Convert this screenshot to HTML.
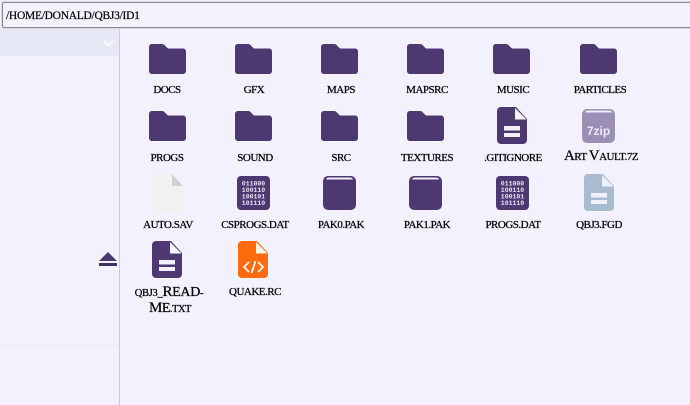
<!DOCTYPE html>
<html>
<head>
<meta charset="utf-8">
<style>
html,body{margin:0;padding:0;width:690px;height:405px;overflow:hidden;background:#f3f1fd;}
body{position:relative;font-family:"Liberation Serif",serif;color:#000;}
.path{position:absolute;left:2px;top:2px;width:690px;height:24px;border:1px solid #8a8a90;border-right:none;background:#f4f2fe;border-radius:2px;box-sizing:content-box;font-size:11.5px;line-height:26px;padding-left:3px;letter-spacing:-.27px;box-shadow:0 0 0 1px #d8d8e0;-webkit-text-stroke:.2px #000;}
.sel{position:absolute;left:0;top:29px;width:119px;height:27px;background:#e6e8f5;}
.vl{position:absolute;left:119px;top:29px;width:1px;height:376px;background:#c9c9e6;}
.hl{position:absolute;left:0;top:344px;width:119px;height:1px;background:#ecebf9;}
.l{position:absolute;width:86px;margin-top:1px;text-align:center;font-size:11px;line-height:15px;letter-spacing:-.5px;white-space:nowrap;-webkit-text-stroke:.25px #000;}
svg.i{position:absolute;overflow:visible;filter:drop-shadow(0 0 .7px #fff);}
</style>
</head>
<body>
<div class="path">/HOME/DONALD/QBJ3/ID1</div>
<div class="sel"></div>
<div class="vl"></div>
<div class="hl"></div>
<svg class="i" style="left:103px;top:39px" width="11" height="8" viewBox="0 0 11 8"><path d="M1 2l4.500 4.500L10 2" fill="none" stroke="#f4f5fb" stroke-width="1.600"/></svg>
<svg class="i" style="left:99px;top:252px" width="18" height="15" viewBox="0 0 18 15"><path d="M9 0L18 9H0Z" fill="#4b3870"/><rect x="0" y="11" width="18" height="3" fill="#3f2f68"/></svg>

<svg width="0" height="0" style="position:absolute">
<defs>
<symbol id="f" viewBox="0 0 37 30"><path d="M3 0h10c1.500 0 2.400.7 3.200 1.800L19 4.500h15c1.700 0 3 1.300 3 3V27c0 1.700-1.300 3-3 3H3c-1.700 0-3-1.300-3-3V3c0-1.700 1.300-3 3-3z" fill="#4d3872"/></symbol>
<symbol id="d" viewBox="0 0 30 37"><path d="M4 0h15l11 12v21c0 2.200-1.800 4-4 4H4c-2.200 0-4-1.800-4-4V4c0-2.200 1.800-4 4-4z" fill="#4d3872"/><path d="M18 1L29.500 12.500H18z" fill="#f7f6fc"/><rect x="7" y="19" width="16" height="4.500" fill="#f3f1fd"/><rect x="7" y="26" width="16" height="4" fill="#f3f1fd"/></symbol>
<symbol id="b" viewBox="0 0 33 34"><rect width="33" height="34" rx="4" fill="#4d3872"/><text x="16.500" y="9.500" font-family="Liberation Mono,monospace" font-size="6.500" font-weight="bold" fill="#e8e5f0" text-anchor="middle">011000</text><text x="16.500" y="16" font-family="Liberation Mono,monospace" font-size="6.500" font-weight="bold" fill="#e8e5f0" text-anchor="middle">100110</text><text x="16.500" y="22.500" font-family="Liberation Mono,monospace" font-size="6.500" font-weight="bold" fill="#e8e5f0" text-anchor="middle">100101</text><text x="16.500" y="29" font-family="Liberation Mono,monospace" font-size="6.500" font-weight="bold" fill="#e8e5f0" text-anchor="middle">101110</text></symbol>
<symbol id="p" viewBox="0 0 33 34"><rect width="33" height="34" rx="5" fill="#4d3872"/><path d="M3 3.500c.5-1.500 1.500-2 3-2h21c1.500 0 2.500.5 3 2z" fill="#f3f1fd"/></symbol>
</defs>
</svg>

<svg class="i" style="left:149px;top:44px" width="37" height="30"><use href="#f"/></svg>
<svg class="i" style="left:235px;top:44px" width="37" height="30"><use href="#f"/></svg>
<svg class="i" style="left:321px;top:44px" width="37" height="30"><use href="#f"/></svg>
<svg class="i" style="left:407px;top:44px" width="37" height="30"><use href="#f"/></svg>
<svg class="i" style="left:493px;top:44px" width="37" height="30"><use href="#f"/></svg>
<svg class="i" style="left:580px;top:44px" width="37" height="30"><use href="#f"/></svg>
<div class="l" style="left:124px;top:82px">DOCS</div>
<div class="l" style="left:211px;top:82px">GFX</div>
<div class="l" style="left:298px;top:82px">MAPS</div>
<div class="l" style="left:384px;top:82px">MAPSRC</div>
<div class="l" style="left:470px;top:82px">MUSIC</div>
<div class="l" style="left:557px;top:82px">PARTICLES</div>

<svg class="i" style="left:149px;top:111px" width="37" height="30"><use href="#f"/></svg>
<svg class="i" style="left:235px;top:111px" width="37" height="30"><use href="#f"/></svg>
<svg class="i" style="left:321px;top:111px" width="37" height="30"><use href="#f"/></svg>
<svg class="i" style="left:407px;top:111px" width="37" height="30"><use href="#f"/></svg>
<svg class="i" style="left:497px;top:107px" width="30" height="37"><use href="#d"/></svg>
<svg class="i" style="left:582px;top:109px" width="33" height="34" viewBox="0 0 33 34"><rect width="33" height="34" rx="5" fill="#9b8fb5"/><path d="M3 3.500c.5-1.500 1.500-2 3-2h21c1.500 0 2.500.5 3 2z" fill="#f0eef8"/><text x="16.500" y="26" font-family="Liberation Sans,sans-serif" font-size="12" font-weight="bold" fill="#eeeaf6" text-anchor="middle">7zip</text></svg>
<div class="l" style="left:124px;top:150px">PROGS</div>
<div class="l" style="left:212px;top:150px">SOUND</div>
<div class="l" style="left:298px;top:150px">SRC</div>
<div class="l" style="left:384px;top:150px">TEXTURES</div>
<div class="l" style="left:470px;top:150px">.GITIGNORE</div>
<div class="l" style="left:558px;top:148px"><span style="font-size:15px">A</span>RT <span style="font-size:15px">V</span>AULT.7Z</div>

<svg class="i" style="left:153px;top:174px;filter:none" width="30" height="38" viewBox="0 0 30 38"><path d="M0 0h19l11 12v26H0z" fill="#f2f1ef"/><path d="M19 0l11 12H19z" fill="#d2d2d0"/></svg>
<svg class="i" style="left:237px;top:176px" width="33" height="34"><use href="#b"/></svg>
<svg class="i" style="left:323px;top:176px" width="33" height="34"><use href="#p"/></svg>
<svg class="i" style="left:409px;top:176px" width="33" height="34"><use href="#p"/></svg>
<svg class="i" style="left:496px;top:176px" width="33" height="34"><use href="#b"/></svg>
<svg class="i" style="left:584px;top:174px" width="30" height="37" viewBox="0 0 30 37"><path d="M4 0h15l11 12v21c0 2.200-1.800 4-4 4H4c-2.200 0-4-1.800-4-4V4c0-2.200 1.800-4 4-4z" fill="#a8bbd0"/><path d="M18 1L29.500 12.500H18z" fill="#eef0f7"/><rect x="7" y="19" width="16" height="4.500" fill="#f0f2f8"/><rect x="7" y="26" width="16" height="4" fill="#f0f2f8"/></svg>
<div class="l" style="left:125px;top:217px">AUTO.SAV</div>
<div class="l" style="left:212px;top:217px">CSPROGS.DAT</div>
<div class="l" style="left:298px;top:217px">PAK0.PAK</div>
<div class="l" style="left:384px;top:217px">PAK1.PAK</div>
<div class="l" style="left:470px;top:217px">PROGS.DAT</div>
<div class="l" style="left:556px;top:217px">QBJ3.FGD</div>

<svg class="i" style="left:152px;top:241px" width="30" height="37"><use href="#d"/></svg>
<svg class="i" style="left:238px;top:241px" width="30" height="37" viewBox="0 0 30 37"><path d="M4 0h15l11 12v21c0 2.200-1.800 4-4 4H4c-2.200 0-4-1.800-4-4V4c0-2.200 1.800-4 4-4z" fill="#ff6a0d"/><path d="M18 1L29.500 12.500H18z" fill="#fff1e6"/><path d="M11 21l-5 5 5 5M20 21l5 5-5 5M17.500 20l-4 12" fill="none" stroke="#fff" stroke-width="1.700"/></svg>
<div class="l" style="left:126px;top:284px;font-size:10.500px;letter-spacing:-.3px"><span>QBJ3_</span><span style="font-size:15px">R</span><span style="font-size:14px">EAD</span>-</div>
<div class="l" style="left:127px;top:300px;font-size:10.500px"><span style="font-size:15px">M</span><span style="font-size:14px">E</span>.TXT</div>
<div class="l" style="left:212px;top:284px">QUAKE.RC</div>
</body>
</html>
